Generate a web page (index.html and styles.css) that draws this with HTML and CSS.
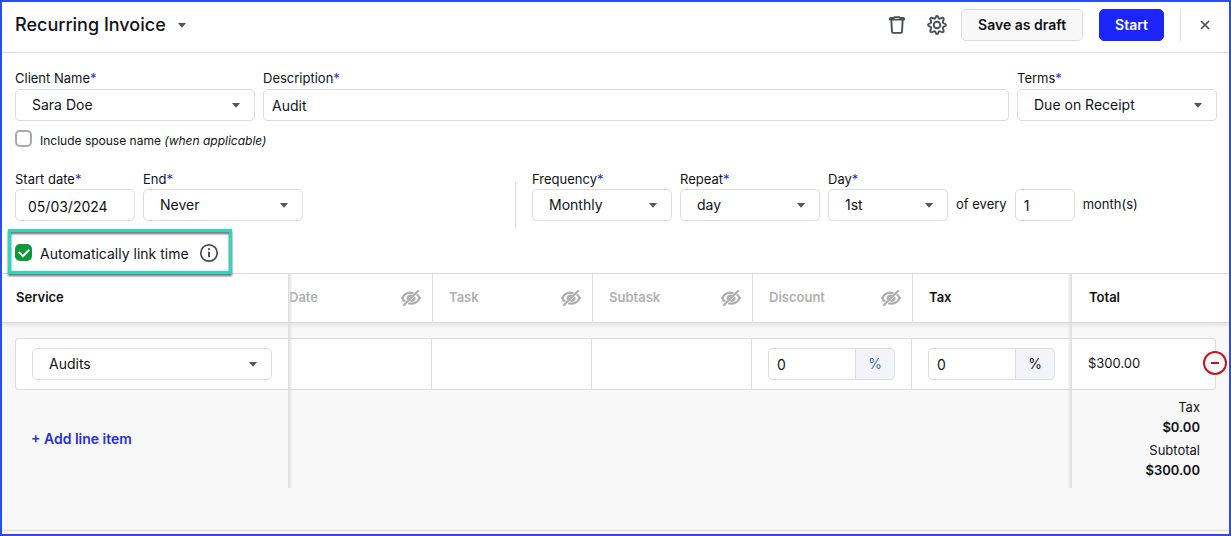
FILE: index.html
```html
<!DOCTYPE html>
<html lang="en">
<head>
<meta charset="utf-8">
<title>Recurring Invoice</title>
<link rel="stylesheet" href="styles.css">
</head>
<body>
<svg class="defs" aria-hidden="true">
  <symbol id="caret" viewBox="0 0 8 5"><path d="M0 0h8L4.500 4.300q-.5.500-1 0z" fill="#54575a"/></symbol>
  <symbol id="eye-off" viewBox="0 0 20 16">
    <g fill="none" stroke="#acacae" stroke-width="2.200" stroke-linecap="round" stroke-linejoin="round">
      <path d="M11.500 2.800Q10.700 2.700 9.700 2.700C5.500 2.800 2.700 5 1.200 8.200q1 1.800 2.300 2.900"/>
      <path d="M16.500 5Q18 6.400 18.800 8.200c-1.900 3.500-5 5.500-8.800 5.500q-1 0-2-.2"/>
      <path d="M10.500 5.500Q7 5.500 6.500 8.600M13.500 7.700q0 3-3.200 3.300"/>
      <path d="M3 15L17 1"/>
    </g>
  </symbol>
</svg>
<div class="window">
  <header class="topbar">
    <h1 class="title">Recurring Invoice</h1>
    <button class="icon-btn title-menu" aria-label="Change invoice type"><svg class="caret"><use href="#caret"/></svg></button>
    <div class="actions">
      <button class="icon-btn" aria-label="Delete">
        <svg width="20" height="20" viewBox="0 0 20 20" fill="none" stroke="#4b4f54" stroke-width="1.900" stroke-linejoin="round" stroke-linecap="round"><path d="M2.900 4.600V3.700q0-.7.800-.8l3.200-.2.900-.6h4.400l.9.600 3.200.2q.8.100.8.800v.9z"/><path d="M4.300 4.900l.7 11.700q.1 1.300 1.300 1.300h7.400q1.200 0 1.300-1.300l.7-11.700"/></svg>
      </button>
      <button class="icon-btn" aria-label="Settings">
        <svg width="20" height="20" viewBox="0 0 20 20" fill="none" stroke="#4b4f54" stroke-width="1.900" stroke-linejoin="round"><path d="M8.600 2.500Q8.900 1 10 1t1.400 1.500q.3 1.500 1.500 1.200 2.600-1.600 3.500-.6t-.6 3.500q-.3 1.400 1.100 1.800Q19 8.900 19 10t-2.100 1.600q-1.400.4-1.100 1.800 1.500 2.500.6 3.500t-3.500-.6q-1.200-.3-1.500 1.200Q11.100 19 10 19t-1.400-1.500q-.3-1.500-1.500-1.200-2.600 1.600-3.500.6t.6-3.500q.3-1.400-1.100-1.800Q1 11.100 1 10t2.100-1.600q1.400-.4 1.100-1.800-1.500-2.500-.6-3.500t3.500.6q1.200.3 1.500-1.200z"/><circle cx="10" cy="10" r="3.300"/></svg>
      </button>
      <button class="btn">Save as draft</button>
      <button class="btn btn-primary">Start</button>
      <span class="rule"></span>
      <button class="icon-btn close" aria-label="Close">
        <svg width="10" height="10" viewBox="0 0 10 10" stroke="#4b4f54" stroke-width="1.700"><path d="M1 1l8 8M9 1L1 9"/></svg>
      </button>
    </div>
  </header>

  <form class="details">
    <div class="row-main">
      <div class="field">
        <label for="client">Client Name<span class="req">*</span></label>
        <div class="select"><select id="client"><option>Sara Doe</option></select><svg class="caret"><use href="#caret"/></svg></div>
      </div>
      <div class="field">
        <label for="description">Description<span class="req">*</span></label>
        <input class="input" id="description" type="text" value="Audit">
      </div>
      <div class="field">
        <label for="terms">Terms<span class="req">*</span></label>
        <div class="select"><select id="terms"><option>Due on Receipt</option></select><svg class="caret"><use href="#caret"/></svg></div>
      </div>
    </div>

    <div class="check spouse">
      <input type="checkbox" id="spouse">
      <label for="spouse">Include spouse name <em>(when applicable)</em></label>
    </div>

    <div class="row-schedule">
      <div class="group">
        <div class="field w-120">
          <label for="start">Start date<span class="req">*</span></label>
          <input class="input date" id="start" type="text" value="05/03/2024">
        </div>
        <div class="field w-160">
          <label for="end">End<span class="req">*</span></label>
          <div class="select"><select id="end"><option>Never</option></select><svg class="caret"><use href="#caret"/></svg></div>
        </div>
      </div>
      <div class="group group-repeat">
        <div class="field w-140">
          <label for="frequency">Frequency<span class="req">*</span></label>
          <div class="select"><select id="frequency"><option>Monthly</option></select><svg class="caret"><use href="#caret"/></svg></div>
        </div>
        <div class="field w-140">
          <label for="repeat">Repeat<span class="req">*</span></label>
          <div class="select"><select id="repeat"><option>day</option></select><svg class="caret"><use href="#caret"/></svg></div>
        </div>
        <div class="field w-120">
          <label for="day">Day<span class="req">*</span></label>
          <div class="select"><select id="day"><option>1st</option></select><svg class="caret"><use href="#caret"/></svg></div>
        </div>
        <label class="inline" for="months">of every</label>
        <input class="input w-60" id="months" type="text" value="1">
        <span class="inline">month(s)</span>
      </div>
    </div>

    <div class="check link-time">
      <input type="checkbox" id="link" checked>
      <label for="link">Automatically link time</label>
      <svg width="20" height="20" viewBox="0 0 20 20" fill="none" stroke="#4b4f54" stroke-width="1.700"><circle cx="10" cy="10" r="8.200"/><path d="M10 8.800V14" stroke-width="2"/><circle cx="10" cy="6.200" r="1.100" fill="#4b4f54" stroke="none"/></svg>
    </div>
  </form>

  <main class="lines">
    <table>
      <colgroup><col><col class="c-date"><col class="c-mid"><col class="c-mid"><col class="c-mid"><col class="c-mid"><col class="c-total"></colgroup>
      <thead>
        <tr>
          <th class="h-service">Service</th>
          <th class="off h-date edge-left"><div class="head">Date<svg class="eye"><use href="#eye-off"/></svg></div></th>
          <th class="off sep"><div class="head">Task<svg class="eye"><use href="#eye-off"/></svg></div></th>
          <th class="off sep"><div class="head">Subtask<svg class="eye"><use href="#eye-off"/></svg></div></th>
          <th class="off sep"><div class="head">Discount<svg class="eye"><use href="#eye-off"/></svg></div></th>
          <th class="sep edge-right">Tax</th>
          <th class="h-total">Total</th>
        </tr>
      </thead>
      <tbody>
        <tr>
          <td class="first"><div class="cell"><div class="select"><select aria-label="Service"><option>Audits</option></select><svg class="caret"><use href="#caret"/></svg></div></div></td>
          <td class="edge-left"><div class="cell ruled"></div></td>
          <td><div class="cell ruled"></div></td>
          <td><div class="cell ruled"></div></td>
          <td><div class="cell ruled"><div class="percent"><input class="input" type="text" value="0" aria-label="Discount"><button class="unit active">%</button></div></div></td>
          <td class="edge-right"><div class="cell tax"><div class="percent"><input class="input" type="text" value="0" aria-label="Tax"><button class="unit">%</button></div></div></td>
          <td class="last"><div class="cell">$300.00
            <button class="remove" aria-label="Remove line"><svg width="24" height="24" viewBox="0 0 24 24" fill="#fff" stroke="#c8141a" stroke-width="2"><circle cx="12" cy="12" r="11"/><path d="M8 12h8"/></svg></button></div></td>
        </tr>
      </tbody>
      <tfoot>
        <tr>
          <td class="add"><button class="add-btn">+ Add line item</button></td>
          <td class="edge-left"></td>
          <td></td>
          <td></td>
          <td></td>
          <td class="edge-right"></td>
          <td><dl class="totals"><dt>Tax</dt><dd>$0.00</dd><dt>Subtotal</dt><dd>$300.00</dd></dl></td>
        </tr>
      </tfoot>
    </table>
  </main>
  <div class="foot"></div>
</div>
</body>
</html>
```

FILE: styles.css
```css
* { box-sizing: border-box; }

body {
  margin: 0;
  font: 13px/16px Inter, "Liberation Sans", sans-serif;
  color: #101318;
}

button, input, select { font: inherit; color: inherit; margin: 0; }
button { cursor: pointer; }
svg { display: block; flex: none; }
.defs { position: absolute; width: 0; height: 0; }

.window {
  display: flex;
  flex-direction: column;
  min-height: 100vh;
  border: 2px solid #2e4bef;
  background: #fff;
}

/* Top bar */
.topbar {
  display: flex;
  align-items: center;
  padding: 7px 19px 11px 13px;
  border-bottom: 1px solid #dcdcde;
}
.title { margin: 0; font-size: 18px; line-height: 24px; font-weight: 500; }
.icon-btn { display: flex; padding: 0; border: 0; background: none; }
.title-menu { margin-left: 12px; }
.caret { width: 8px; height: 5px; }
.actions { display: flex; align-items: center; margin-left: auto; }
.actions .icon-btn + .icon-btn { margin-left: 20px; }
.btn {
  height: 32px;
  margin-left: 14px;
  padding: 0 16px;
  border: 1px solid #dcdcde;
  border-radius: 5px;
  background: #f8f8f8;
  font-size: 14px;
  font-weight: 600;
}
.btn-primary { margin-left: 16px; padding: 0 15px; border-color: #1c26fb; background: #1c26fb; color: #fff; }
.rule { width: 1px; height: 32px; margin-left: 16px; background: #dcdcde; }
.close { margin-left: 19px; }

/* Invoice details */
.details { padding: 17px 12px 12px 13px; }
.row-main { display: grid; grid-template-columns: 240px 1fr 200px; gap: 8px; }
.field { display: flex; flex-direction: column; gap: 3px; }
.row-schedule .field { gap: 2px; }
.req { color: #2a2ee0; }
.w-60 { width: 60px; }
.w-120 { width: 120px; }
.w-140 { width: 140px; }
.w-160 { width: 160px; }

.input, .select select {
  height: 32px;
  padding: 0 8px;
  border: 1px solid #dcdcde;
  border-radius: 5px;
  background: #fff;
  font-size: 14px;
}
.input.date { padding: 2px 12px 0; }
.select { display: grid; align-items: center; }
.select select { grid-area: 1 / 1; width: 100%; padding: 0 32px 0 16px; appearance: none; }
.select .caret { grid-area: 1 / 1; justify-self: end; margin-right: 15px; pointer-events: none; }

.check { display: flex; align-items: center; gap: 8px; height: 17px; }
.check input {
  appearance: none;
  width: 17px;
  height: 17px;
  border: 2px solid #a9a9ab;
  border-radius: 5px;
  background: #fff;
}
.spouse { margin-top: 9px; }
.spouse label { padding-top: 4px; font-size: 12px; }

.row-schedule { display: grid; grid-template-columns: 500px 1fr; margin-top: 24px; }
.group { display: flex; align-items: flex-end; gap: 8px; padding-bottom: 8px; }
.group-repeat {
  padding-left: 17px;
  background: linear-gradient(#dcdcde, #dcdcde) left bottom / 1px 47px no-repeat;
}
.inline { padding-bottom: 9px; }

.link-time { position: relative; width: max-content; margin-top: 15px; }
.link-time label { padding-top: 2px; font-size: 14px; }
.link-time svg { margin-left: 2px; }
.link-time input { display: grid; place-items: center; border-color: #0a9a3c; background: #0a9a3c; }
.link-time input::before {
  content: "";
  width: 8px;
  height: 5px;
  margin-bottom: 2px;
  border: solid #fff;
  border-width: 0 0 2px 2px;
  transform: rotate(-45deg);
}
.link-time::after {
  content: "";
  position: absolute;
  inset: -15px -13px -13px -7px;
  border: 3px solid #2ad8c0;
  filter: drop-shadow(0 2px 1px rgba(0, 0, 0, 0.6));
  pointer-events: none;
}

/* Line items */
.lines { flex: 1; border-top: 1px solid #dcdcde; background: #f8f8f8; }
table { width: 100%; table-layout: fixed; border-collapse: separate; border-spacing: 0; }
.c-date { width: 144px; }
.c-mid { width: 160px; }
.c-total { width: 157px; }

th {
  height: 49px;
  padding: 0 11px 2px 16px;
  border-bottom: 1px solid #dcdcde;
  background: #fff;
  font-weight: 600;
  text-align: left;
}
th.off { color: #b0b0b2; }
th.sep { border-left: 1px solid #dcdcde; }
th.h-service { padding-left: 14px; }
th.h-date { padding-left: 1px; }
th.h-total { padding-left: 17px; }
.head { display: flex; align-items: center; justify-content: space-between; }
.eye { width: 20px; height: 16px; margin-top: 2px; }

td { padding: 0; }
tbody td {
  padding-top: 15px;
  background: linear-gradient(#e4e4e6, #f8f8f8) top / 100% 5px no-repeat;
}
td.first { padding-left: 13px; }
td.last { padding-right: 13px; }
.cell {
  position: relative;
  height: 52px;
  padding: 9px 16px;
  border: solid #dcdcde;
  border-width: 1px 0;
  background: #fff;
}
.cell.ruled { border-right-width: 1px; }
.cell.tax { padding-right: 17px; }
.first .cell { border-left-width: 1px; border-radius: 4px 0 0 4px; }
.last .cell { padding-top: 16px; border-right-width: 1px; border-radius: 0 4px 4px 0; }

.edge-left, .edge-right { position: relative; }
.edge-left::before, .edge-right::before {
  content: "";
  position: absolute;
  z-index: 1;
  top: 0;
  bottom: 0;
  width: 4px;
}
thead .edge-left::before, thead .edge-right::before { bottom: -1px; }
.edge-left::before { left: 0; background: linear-gradient(to right, #dcdcdf, rgba(220, 220, 223, 0.2)); }
.edge-right::before { right: 0; background: linear-gradient(to left, #dcdcdf, rgba(220, 220, 223, 0.2)); }

.percent { display: grid; grid-template-columns: 1fr 40px; }
.percent .input { width: 100%; min-width: 0; border-right: 0; border-radius: 5px 0 0 5px; }
.unit {
  padding: 0;
  border: 1px solid #dcdcde;
  border-radius: 0 5px 5px 0;
  background: #f3f4f9;
  font-size: 14px;
}
.unit.active { color: #3a69bd; }
.remove {
  position: absolute;
  top: 12px;
  right: -12px;
  z-index: 2;
  padding: 0;
  border: 0;
  border-radius: 50%;
  background: none;
}

tfoot td { height: 98px; }
.add { padding-left: 29px; }
.add-btn { padding: 0; border: 0; background: none; color: #2a2ed8; font-size: 14px; font-weight: 600; }
.totals { margin: 0; padding: 7px 29px 8px 0; line-height: 20px; text-align: right; }
.totals dd { margin: 0 0 3px; font-weight: 600; }
.totals dd:last-child { margin-bottom: 0; }

.foot { height: 4px; border-top: 1px solid #dcdcde; background: #fafafa; }
```
